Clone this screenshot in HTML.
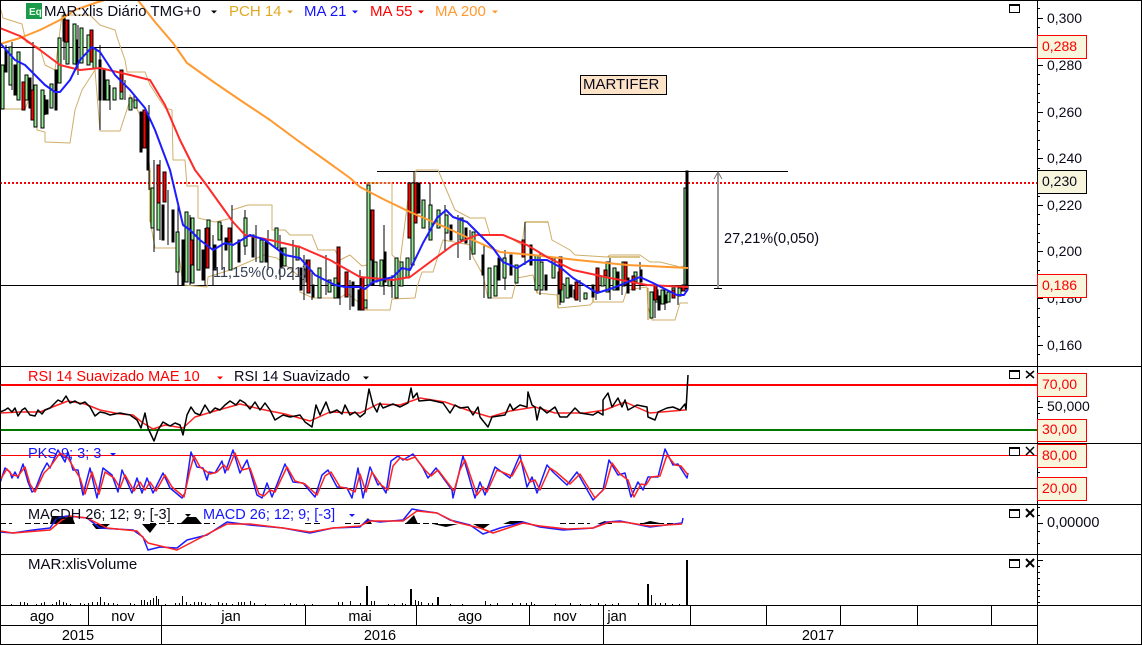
<!DOCTYPE html>
<html><head><meta charset="utf-8"><style>
html,body{margin:0;padding:0;background:#fff;width:1142px;height:645px;overflow:hidden}
svg{display:block}
text{font-family:"Liberation Sans",sans-serif;font-size:14px;fill:#0a0a1a}
.t{font-size:15px}
.m{font-size:14.500px}
.c{shape-rendering:crispEdges}
.l{fill:none;stroke-linejoin:round}
.b{fill:#f7f5dc;stroke:#f00;stroke-width:1}
.r{fill:#f00}
.ax{text-anchor:middle;font-size:14.500px;fill:#000}
</style></head><body>
<svg width="1142" height="645" viewBox="0 0 1142 645" xmlns="http://www.w3.org/2000/svg">
<rect width="1142" height="645" fill="#fff"/>
<!-- price reference lines -->
<g class="c" stroke="#000" fill="none">
<path d="M0 47.500H1037M0 285.500H1037M377 171.500H788"/>
</g>
<path d="M0 183H1037" stroke="#f00" stroke-width="2" stroke-dasharray="2 2" class="c"/>
<!-- channel -->
<g class="l" stroke="#cfae6a" stroke-width="1">
<polyline points="1,10 3,18 22,24 26,42 40,48 45,65 55,70 62,15 90,15 100,25 115,30 118,40 125,60 127,72 145,72 150,85 165,108 172,110 173,160 185,160 187,186 198,186 198,218 215,222 232,218 232,210 248,205 272,205 272,230 285,230 290,235 312,235 318,250 335,250 340,260 350,255 362,266 367,265 367,183 392,183 392,255 400,262 410,183 415,183 416,170 438,170 455,210 470,218 485,218 490,235 505,235 522,245 525,222 548,222 552,240 570,250 575,255 607,257 610,255 640,255 650,262 660,262 672,265 680,267 688,265"/>
<polyline points="1,109 25,109 35,85 37,130 45,132 45,142 70,143 75,110 82,90 95,70 100,131 120,131 130,100 130,95 145,125 150,170 150,220 155,248 178,248 183,285 207,287 208,277 230,270 253,260 263,255 277,258 300,277 300,292 313,298 340,298 347,293 358,302 360,310 390,310 392,299 415,298 417,287 422,272 433,272 443,240 470,245 473,257 483,275 488,298 512,298 517,278 533,275 537,293 557,295 558,308 590,305 593,302 623,302 627,290 647,287 648,307 652,320 675,320 680,303 688,303"/>
</g>
<path d="M367 310V183H378M150 170V222M183 285V262M411 183V210M488 298V272M537 293V268M558 308V282M593 302V295M648 320V288M687 171V288M525 222H548M608 257H640" stroke="#b58a10" stroke-width="1" fill="none" class="c"/>
<!-- wicks -->
<path class="c" stroke="#000" fill="none" d="M6 45V72M12 42V90M33 42V95M45 95V115M64 12V60M78 25V75M100 45V130M110 85V110M125 80V100M134 95V108M149 105V190M154 160V252M160 160V240M168 190V245M178 205V285M190 215V285M205 228V285M213 235V285M222 225V270M232 205V270M245 210V255M256 225V262M268 230V270M280 235V280M293 240V280M304 255V300M312 270V300M326 255V295M340 270V305M350 280V310M360 270V310M372 220V285M384 225V295M392 275V298M414 172V260M430 183V240M445 205V250M458 215V258M470 230V260M484 245V298M505 250V290M525 222V265M540 252V295M560 268V305M580 280V302M596 285V300M610 258V300M622 262V295M640 262V290M655 285V318M665 288V310M678 285V305M687 171V292"/>
<!-- green bodies -->
<path class="c" fill="#90ee90" stroke="#000" d="M1 65h3v44h-3zM9 47h3v38h-3zM17 52h3v48h-3zM25 75h3v25h-3zM34 85h3v42h-3zM41 90h3v38h-3zM50 84h3v24h-3zM58 38h3v45h-3zM66 20h3v44h-3zM73 24h3v40h-3zM80 28h3v35h-3zM87 35h3v30h-3zM93 48h3v20h-3zM106 80h3v20h-3zM113 88h3v12h-3zM120 85h3v14h-3zM129 98h3v12h-3zM134 100h3v8h-3zM151 188h3v40h-3zM157 190h3v40h-3zM176 232h3v40h-3zM185 212h3v70h-3zM191 218h3v65h-3zM197 230h3v40h-3zM207 220h3v28h-3zM218 222h3v18h-3zM229 230h3v40h-3zM244 218h3v28h-3zM260 240h3v22h-3zM275 228h3v20h-3zM283 248h3v18h-3zM296 246h3v14h-3zM306 260h3v22h-3zM318 268h3v30h-3zM328 280h3v12h-3zM334 278h3v20h-3zM345 282h3v12h-3zM364 300h3v8h-3zM367 185h3v100h-3zM374 262h3v20h-3zM380 260h3v26h-3zM388 280h3v6h-3zM395 258h3v40h-3zM400 262h3v24h-3zM406 258h3v20h-3zM411 183h3v82h-3zM422 200h3v28h-3zM429 205h3v35h-3zM437 210h3v18h-3zM445 215h3v18h-3zM460 218h3v22h-3zM472 232h3v22h-3zM488 268h3v30h-3zM494 266h3v30h-3zM503 258h3v20h-3zM515 265h3v18h-3zM535 255h3v35h-3zM540 262h3v28h-3zM552 258h3v20h-3zM561 284h3v18h-3zM566 278h3v20h-3zM574 290h3v8h-3zM584 293h3v6h-3zM601 276h3v10h-3zM606 262h3v30h-3zM613 268h3v22h-3zM622 262h3v24h-3zM634 272h3v10h-3zM650 292h3v26h-3zM655 290h3v12h-3zM661 290h3v14h-3zM667 292h3v10h-3zM672 288h3v10h-3zM678 288h3v8h-3zM684 188h3v100h-3z"/>
<!-- black bodies -->
<path class="c" fill="#000" stroke="#000" d="M5 50h2v22h-2zM14 65h2v30h-2zM29 78h2v30h-2zM46 100h2v14h-2zM55 70h2v40h-2zM63 16h2v25h-2zM76 40h2v25h-2zM99 60h2v40h-2zM103 70h2v30h-2zM140 112h2v40h-2zM147 115h2v55h-2zM162 205h2v35h-2zM172 210h2v32h-2zM182 240h2v45h-2zM202 250h2v30h-2zM214 245h2v25h-2zM225 238h2v12h-2zM238 240h2v22h-2zM252 235h2v22h-2zM265 242h2v20h-2zM280 248h2v20h-2zM300 268h2v22h-2zM312 285h2v12h-2zM338 280h2v18h-2zM352 282h2v24h-2zM358 290h2v20h-2zM372 225h2v60h-2zM384 252h2v30h-2zM418 183h2v30h-2zM450 225h2v15h-2zM465 228h2v15h-2zM482 255h2v20h-2zM498 258h2v22h-2zM510 255h2v20h-2zM530 245h2v20h-2zM545 275h2v15h-2zM558 272h2v22h-2zM570 285h2v12h-2zM592 285h2v12h-2zM617 272h2v18h-2zM627 278h2v15h-2zM640 270h2v12h-2zM658 296h2v14h-2zM665 295h2v8h-2zM686 171h2v118h-2z"/>
<!-- red bodies -->
<path class="c" fill="#f00" stroke="#000" d="M22 82h3v28h-3zM31 90h3v30h-3zM65 20h3v22h-3zM90 30h3v32h-3zM120 70h3v22h-3zM143 110h3v38h-3zM157 165h3v38h-3zM163 172h3v30h-3zM190 240h3v25h-3zM206 228h3v40h-3zM228 228h3v14h-3zM307 260h3v33h-3zM337 247h3v36h-3zM345 272h3v25h-3zM361 277h3v33h-3zM371 210h3v50h-3zM408 183h3v55h-3zM414 183h3v40h-3zM522 240h3v17h-3zM559 257h3v33h-3zM596 268h3v24h-3zM604 270h3v6h-3zM575 282h3v18h-3zM624 262h3v23h-3zM632 276h3v14h-3zM654 285h3v15h-3zM672 290h3v8h-3zM682 285h3v6h-3z"/>
<!-- MA lines -->
<polyline class="l" stroke="#ff9a30" stroke-width="2" points="0,44 20,38 40,30 60,20 75,10 95,3 108,-1"/>
<polyline class="l" stroke="#ff9a30" stroke-width="2" points="137,-1 155,22 173,43 187,63 215,83 240,100 270,120 297,140 325,160 350,178 360,187 385,200 410,212 447,228 473,240 500,252 533,255 577,260 627,265 688,268"/>
<polyline class="l" stroke="#ff2a2a" stroke-width="2" points="0,28 20,36 40,50 60,65 80,70 100,68 130,75 150,80 165,105 180,140 195,170 205,183 233,222 245,235 270,240 300,247 330,260 360,277 393,280 410,277 453,245 477,235 503,235 527,245 547,257 573,270 610,278 647,285 688,287"/>
<polyline class="l" stroke="#1c1cff" stroke-width="2" points="0,43 15,60 25,65 45,85 55,92 60,92 70,80 80,60 92,47 100,52 115,75 130,90 145,108 155,130 170,170 183,225 190,230 200,240 213,250 225,243 233,245 250,235 265,240 285,255 300,258 315,275 335,285 345,287 360,287 365,289 373,282 393,277 402,268 410,270 423,243 437,218 446,210 453,217 467,222 477,232 493,248 503,262 517,268 530,260 547,260 560,267 573,278 597,293 613,288 640,277 653,283 677,295 684,295 688,289"/>
<!-- arrow -->
<g fill="none" stroke="#999"><path d="M718 173V288" stroke-width="2"/><path d="M714 179L718 172L722 179" stroke="#777"/></g>
<path d="M714 288.500H722" stroke="#000" class="c"/>
<text x="724" y="243" class="m">27,21%(0,050)</text>
<text x="213" y="277" class="m" style="fill:#333c50">11,15%(0,021)</text>
<rect x="580.500" y="75.500" width="86" height="19" fill="#fde3c8" stroke="#000" class="c"/>
<text x="583" y="89" class="t">MARTIFER</text>
<!-- legend -->
<rect x="26" y="3" width="16" height="16" fill="#1a9a4a"/>
<text x="29" y="15" style="font-size:10px;font-weight:bold;fill:#e8ffe8">Eq</text>
<text x="44" y="16" class="t">MAR:xlis Diário TMG+0</text>
<path d="M211 10.500h6l-3 3z" fill="#000"/>
<text x="229" y="16" class="t" style="fill:#e0a820">PCH 14</text><path d="M287 10.500h6l-3 3z" fill="#d6a830"/>
<text x="304" y="16" class="t" style="fill:#1414ff">MA 21</text><path d="M352 10.500h6l-3 3z" fill="#1414ff"/>
<text x="370" y="16" class="t" style="fill:#f00">MA 55</text><path d="M418 10.500h6l-3 3z" fill="#f00"/>
<text x="435" y="16" class="t" style="fill:#ff9a30">MA 200</text><path d="M492 10.500h6l-3 3z" fill="#ff9a30"/>
<!-- RSI -->
<path d="M0 385H1037" stroke="#f00" stroke-width="2" class="c"/>
<path d="M0 430H1037" stroke="#007800" stroke-width="2" class="c"/>
<polyline class="l" stroke="#f22" stroke-width="1.500" points="0,413 20,412 40,412 55,406 68,401 85,404 100,410 120,414 133,415 143,423 153,429 165,425 183,428 195,417 215,411 240,404 260,409 285,414 310,421 330,412 360,413 378,404 400,405 420,398 445,402 470,411 490,417 510,411 535,407 555,413 585,413 605,410 625,402 650,413 685,410"/>
<polyline class="l" stroke="#000" stroke-width="1.500" points="0,412 5,410 8,408 12,412 15,408 18,416 22,410 25,408 30,415 35,416 38,410 42,414 45,410 50,408 54,404 58,400 62,402 66,396 70,403 75,401 80,404 85,402 90,407 95,416 100,412 105,413 110,415 120,413 130,415 137,420 141,428 145,413 148,428 154,441 158,430 163,422 170,426 175,423 180,425 183,435 187,415 191,407 195,413 200,415 205,405 210,413 215,408 220,410 225,405 230,401 236,405 240,400 245,403 250,409 255,402 260,410 265,403 270,410 275,420 283,415 290,417 300,415 305,422 312,427 316,405 320,415 326,402 330,413 337,410 342,414 345,405 350,415 355,412 360,417 365,413 369,389 373,405 377,412 380,403 383,408 393,404 400,407 408,403 411,388 413,398 417,393 419,401 430,400 443,403 450,413 455,405 460,408 468,407 473,415 478,407 480,417 488,427 492,417 505,415 510,404 513,410 520,405 527,407 528,392 532,405 535,407 537,420 540,407 547,413 555,407 560,417 567,417 575,408 580,413 593,415 598,412 603,415 603,400 608,393 612,407 618,398 622,407 625,400 628,410 637,405 647,407 648,417 655,420 658,412 667,408 673,407 680,410 685,404 686,410 688,375"/>
<text x="28" y="381" class="m" style="fill:#f00">RSI 14 Suavizado MAE 10</text><path d="M217 376.500h6l-3 3z" fill="#f00"/>
<text x="234" y="381" class="m">RSI 14 Suavizado</text><path d="M363 376.500h6l-3 3z" fill="#000"/>
<!-- PKS -->
<g class="c" fill="none"><path d="M0 455.500H1037" stroke="#f00"/><path d="M0 488.500H1037" stroke="#000"/></g>
<polyline class="l" stroke="#1c1cff" stroke-width="1.500" points="0,483 5,468 10,472 12,478 15,472 18,478 23,464 28,482 32,492 35,490 42,472 47,463 50,468 58,450 65,462 68,452 73,470 78,470 83,495 90,468 97,498 103,468 112,475 118,492 122,470 132,493 137,478 142,493 147,478 153,493 163,473 170,488 182,498 185,493 191,452 197,467 203,468 207,480 209,472 215,473 222,461 225,473 233,450 240,473 247,460 257,495 262,498 267,483 272,497 285,464 293,482 303,483 315,497 322,475 328,470 337,487 347,488 352,498 358,468 363,498 370,467 378,485 380,483 386,493 391,461 398,456 403,460 413,454 423,468 428,478 436,468 452,490 453,498 463,456 475,498 480,482 485,495 495,467 510,478 520,455 527,487 532,477 537,493 547,465 553,472 567,485 577,472 593,500 603,490 609,460 618,475 625,473 631,497 638,482 643,490 648,477 658,477 665,449 673,465 678,464 687,478 688,473"/>
<polyline class="l" stroke="#f22" stroke-width="1.500" points="0,480 7,469 12,475 18,476 25,467 30,484 35,492 44,473 50,467 60,453 68,458 75,470 80,478 85,494 92,472 99,494 105,472 114,478 120,488 125,475 134,491 140,482 145,490 150,482 156,491 165,475 172,487 184,497 190,470 194,456 200,467 210,474 217,472 224,465 228,470 235,453 242,470 250,468 259,494 264,496 270,490 275,492 287,467 295,481 305,484 317,495 325,476 331,472 340,487 349,489 355,492 360,474 366,492 372,472 381,485 388,490 393,466 400,458 407,460 415,457 425,470 431,476 438,470 454,491 460,470 465,460 477,495 483,487 487,492 497,470 512,476 521,460 530,482 535,480 540,490 550,468 556,472 570,484 580,474 595,498 605,488 612,463 620,474 628,480 634,497 641,484 646,485 651,477 660,476 667,455 675,465 681,466 688,475"/>
<text x="28" y="458" class="m" style="fill:#1414ff">PKS 9; 3; 3</text><path d="M110 453h6l-3 3z" fill="#1414ff"/>
<!-- MACD -->
<path class="c" stroke="#000" d="M0 523.500H12M25 523.500H48M150 523.500H215M305 523.500H320M345 523.500H360M405 523.500H440M520 523.500H530M560 523.500H590M600 523.500H612M640 523.500H682" stroke-dasharray="6 3" fill="none"/>
<path d="M50 524L52 516H72L75 524ZM92 524H110L104 529H96ZM142 524H157L150 533ZM180 524L187 517H196L202 524ZM363 524L368 518L372 524ZM405 524L414 515L418 524ZM433 524H458L446 527ZM473 524H490L483 529ZM503 524L510 521H522L528 524ZM597 524L605 521L612 524ZM640 524L650 521L665 524Z" fill="#000"/>
<polyline class="l" stroke="#1c1cff" stroke-width="1.500" points="0,532 13,533 33,530 50,528 57,518 67,516 87,518 100,528 133,530 143,537 148,550 160,547 177,548 187,540 207,535 227,522 250,525 283,528 310,533 333,528 360,527 367,520 380,522 403,520 412,509 423,511 437,513 450,520 470,525 483,534 500,528 523,522 540,527 563,530 593,528 607,522 620,521 650,527 682,523 683,518"/>
<polyline class="l" stroke="#f22" stroke-width="1.500" points="0,531 13,533 50,530 62,520 70,516 87,518 107,528 137,531 148,543 177,550 200,538 227,524 250,524 283,528 310,532 333,528 360,526 370,521 380,521 403,521 417,511 437,513 455,522 480,528 493,533 523,523 540,526 567,529 593,528 610,522 623,522 650,526 682,524"/>
<text x="28" y="519" class="m">MACDH 26; 12; 9; [-3]</text><path d="M185 514h6l-3 3z" fill="#000"/>
<text x="203" y="519" class="m" style="fill:#1414ff">MACD 26; 12; 9; [-3]</text><path d="M349 514h6l-3 3z" fill="#1414ff"/>
<!-- volume -->
<text x="28" y="569" class="t">MAR:xlisVolume</text>
<path stroke="#000" fill="none" shape-rendering="crispEdges" stroke-width="1" d="M11.500 605v-1M20.500 605v-3M24.500 605v-3M27.500 605v-2M36.500 605v-1M41.500 605v-2M44.500 605v-3M52.500 605v-1M56.500 605v-3M59.500 605v-5M63.500 605v-3M66.500 605v-2M70.500 605v-1M80.500 605v-2M84.500 605v-1M88.500 605v-2M92.500 605v-3M97.500 605v-3M100.500 605v-8M104.500 605v-3M108.500 605v-2M113.500 605v-2M117.500 605v-1M130.500 605v-2M134.500 605v-1M141.500 605v-5M144.500 605v-5M147.500 605v-3M150.500 605v-5M153.500 605v-7M156.500 605v-9M158.500 605v-6M165.500 605v-1M175.500 605v-2M179.500 605v-2M182.500 605v-9M186.500 605v-3M190.500 605v-1M194.500 605v-3M198.500 605v-3M201.500 605v-3M205.500 605v-2M210.500 605v-1M218.500 605v-3M222.500 605v-2M226.500 605v-2M232.500 605v-1M238.500 605v-3M241.500 605v-3M244.500 605v-3M250.500 605v-4M254.500 605v-2M265.500 605v-1M284.500 605v-1M290.500 605v-2M296.500 605v-1M304.500 605v-1M312.500 605v-1M338.500 605v-3M342.500 605v-3M350.500 605v-4M360.500 605v-2M371.500 605v-4M374.500 605v-4M388.500 605v-1M394.500 605v-1M402.500 605v-2M405.500 605v-1M415.500 605v-5M418.500 605v-4M421.500 605v-3M428.500 605v-2M432.500 605v-2M450.500 605v-1M462.500 605v-1M485.500 605v-4M490.500 605v-1M497.500 605v-2M512.500 605v-2M520.500 605v-2M526.500 605v-2M531.500 605v-3M534.500 605v-1M555.500 605v-1M570.500 605v-2M580.500 605v-1M590.500 605v-1M598.500 605v-2M605.500 605v-1M612.500 605v-1M618.500 605v-2M638.500 605v-2M651.500 605v-10M655.500 605v-2M660.500 605v-2M665.500 605v-2M672.500 605v-1M679.500 605v-1"/>
<path d="M367 605v-19M411 605v-16M438 605v-8M648 605v-21M687 605V560" stroke="#000" stroke-width="2" class="c"/>
<!-- structure -->
<path class="c" stroke="#000" fill="none" d="M0.500 0V645M0 0.500H1142M1141.500 0V645M0 644.500H1142M1037.500 0V645M0 366.500H1142M0 443.500H1142M0 504.500H1142M0 554.500H1142M0 605.500H1142M0 625.500H1037M88.500 605V625M161.500 605V644M305.500 605V625M416.500 605V625M529.500 605V625M603.500 605V644M690.500 605V625M766.500 605V625M840.500 605V625M917.500 605V625M991.500 605V625"/>
<!-- axis ticks -->
<path class="c" stroke="#000" fill="none" d="M1037 18.500h6M1037 65.500h6M1037 112.500h6M1037 158.500h6M1037 205.500h6M1037 251.500h6M1037 298.500h6M1037 345.500h6M1037 8.500h3M1037 27.500h3M1037 37.500h3M1037 74.500h3M1037 84.500h3M1037 93.500h3M1037 102.500h3M1037 121.500h3M1037 130.500h3M1037 140.500h3M1037 149.500h3M1037 168.500h3M1037 177.500h3M1037 186.500h3M1037 196.500h3M1037 214.500h3M1037 224.500h3M1037 233.500h3M1037 242.500h3M1037 261.500h3M1037 270.500h3M1037 279.500h3M1037 289.500h3M1037 308.500h3M1037 317.500h3M1037 326.500h3M1037 336.500h3M1037 354.500h3M1037 407.500h6M1037 401.500h3M1037 413.500h3M1037 455.500h3M1037 472.500h3M1037 523.500h6M1037 507.500h3M1037 515.500h3M1037 531.500h3M1037 543.500h3M1037 560.500h6M1037 566.500h3M1037 572.500h3M1037 578.500h3M1037 584.500h3M1037 590.500h3M1037 596.500h3M1037 602.500h3"/>
<g>
<text x="1047" y="23">0,300</text>
<text x="1047" y="70">0,280</text>
<text x="1047" y="117">0,260</text>
<text x="1047" y="163">0,240</text>
<text x="1047" y="210">0,220</text>
<text x="1047" y="256">0,200</text>
<text x="1047" y="303">0,180</text>
<text x="1047" y="350">0,160</text>
<text x="1047" y="411">50,000</text>
<text x="1047" y="527" class="m">0,00000</text>
</g>
<!-- value boxes -->
<g class="c">
<rect x="1037.500" y="35.500" width="49" height="23" class="b"/>
<rect x="1037.500" y="170.500" width="49" height="23" fill="#f7f5dc" stroke="#000"/>
<rect x="1037.500" y="274.500" width="49" height="23" class="b"/>
<rect x="1037.500" y="373.500" width="49" height="23" class="b"/>
<rect x="1037.500" y="419.500" width="49" height="22" class="b"/>
<rect x="1037.500" y="444.500" width="49" height="23" class="b"/>
<rect x="1037.500" y="477.500" width="49" height="23" class="b"/>
</g>
<text x="1042" y="51" class="r">0,288</text>
<text x="1042" y="186">0,230</text>
<text x="1042" y="290" class="r">0,186</text>
<text x="1042" y="389" class="r">70,00</text>
<text x="1042" y="434" class="r">30,00</text>
<text x="1042" y="460" class="r">80,00</text>
<text x="1042" y="493" class="r">20,00</text>
<!-- window icons -->
<g class="c" fill="none" stroke="#000">
<path d="M1009.500 4.500h10v8h-10zM1009.500 5.500h10"/>
<path d="M1009.500 370.500h10v8h-10zM1009.500 371.500h10"/>
<path d="M1009.500 447.500h10v8h-10zM1009.500 448.500h10"/>
<path d="M1009.500 509.500h10v8h-10zM1009.500 510.500h10"/>
<path d="M1009.500 559.500h10v8h-10zM1009.500 560.500h10"/>
</g>
<g fill="none" stroke="#000" stroke-width="1.500">
<path d="M1026 371L1034 378M1034 371L1026 378"/>
<path d="M1026 447L1034 455M1034 447L1026 455"/>
</g>
<g fill="none" stroke="#000" stroke-width="2">
<path d="M1026 509L1034 517M1034 509L1026 517"/>
<path d="M1026 559L1034 567M1034 559L1026 567"/>
</g>
<!-- time axis -->
<text class="ax" x="42" y="621">ago</text>
<text class="ax" x="123" y="621">nov</text>
<text class="ax" x="231" y="621">jan</text>
<text class="ax" x="360" y="621">mai</text>
<text class="ax" x="470" y="621">ago</text>
<text class="ax" x="565" y="621">nov</text>
<text class="ax" x="617" y="621">jan</text>
<text class="ax" x="78" y="640">2015</text>
<text class="ax" x="380" y="640">2016</text>
<text class="ax" x="818" y="640">2017</text>
</svg>
</body></html>
